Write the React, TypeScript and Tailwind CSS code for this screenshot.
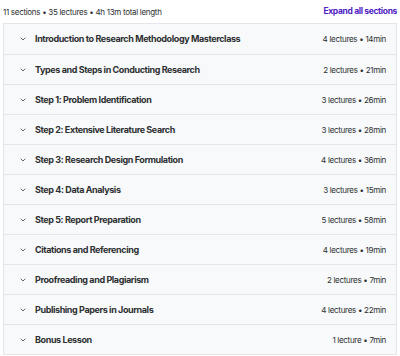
import { ChevronDown } from "lucide-react";

const sections = [
  { title: "Introduction to Research Methodology Masterclass", meta: "4 lectures • 14min" },
  { title: "Types and Steps in Conducting Research", meta: "2 lectures • 21min" },
  { title: "Step 1: Problem Identification", meta: "3 lectures • 26min" },
  { title: "Step 2: Extensive Literature Search", meta: "3 lectures • 28min" },
  { title: "Step 3: Research Design Formulation", meta: "4 lectures • 36min" },
  { title: "Step 4: Data Analysis", meta: "3 lectures • 15min" },
  { title: "Step 5: Report Preparation", meta: "5 lectures • 58min" },
  { title: "Citations and Referencing", meta: "4 lectures • 19min" },
  { title: "Proofreading and Plagiarism", meta: "2 lectures • 7min" },
  { title: "Publishing Papers in Journals", meta: "4 lectures • 22min" },
  { title: "Bonus Lesson", meta: "1 lecture • 7min" },
];

export default function App() {
  return (
    <div className="h-[356px] w-[400px] bg-white px-[3px] font-['Inter',sans-serif] text-[#2d2f31]">
      <div className="flex h-[23px] items-center justify-between">
        <span className="text-[8px] tracking-[-0.3px] text-[#2d2f31]">11 sections • 35 lectures • 4h 13m total length</span>
        <button className="text-[8.5px] font-bold tracking-[-0.35px] text-[#5022c3]">Expand all sections</button>
      </div>
      <div className="border border-[#e4e6e8]">
        {sections.map((s, i) => (
          <div
            key={s.title}
            className={`flex h-[30px] items-center bg-[#f7f9fa] pl-[15px] pr-[10px] ${i > 0 ? "border-t border-[#e4e6e8]" : ""}`}
          >
            <ChevronDown className="h-[8px] w-[8px] text-[#2d2f31]" strokeWidth={2.2} />
            <span className="ml-[8px] flex-1 text-[9px] font-bold tracking-[-0.4px]">{s.title}</span>
            <span className="text-[8px] tracking-[-0.3px] text-[#2d2f31]">{s.meta}</span>
          </div>
        ))}
      </div>
    </div>
  );
}
